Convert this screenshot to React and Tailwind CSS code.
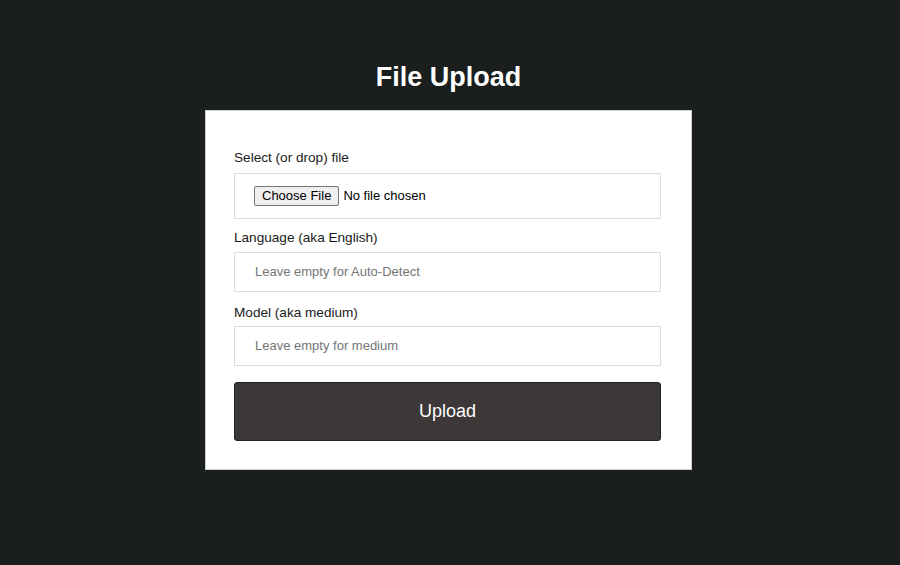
export default function App() {
  const font = { fontFamily: '"Liberation Sans", Arial, sans-serif' };
  return (
    <div className="min-h-screen w-full bg-[#1a1f1e] flex flex-col items-center pt-[59px] pr-[3px]" style={font}>
      <h1 className="text-white font-bold text-[27px] leading-[36px] mb-[15px]">File Upload</h1>
      <div className="w-[487px] bg-white border border-[#d0d0d0] pl-[28px] pr-[30px] pt-[37px] pb-[28px] flex flex-col">
        <label className="text-[13.6px] leading-[20px] text-[#1a1a1a] mb-[5px]">Select (or drop) file</label>
        <div className="h-[46px] border border-[#dcdcdc] flex items-center pl-[19px]">
          <span className="h-[20px] px-[7px] flex items-center bg-[#efefef] border border-[#767676] rounded-[2px] text-[13px] text-black">Choose File</span>
          <span className="ml-[4px] text-[13px] text-black">No file chosen</span>
        </div>
        <label className="mt-[9px] text-[13.6px] leading-[20px] text-[#1a1a1a] mb-[4px]">Language (aka English)</label>
        <div className="h-[40px] border border-[#dcdcdc] flex items-center pl-[20px] text-[13px] text-[#757575]">Leave empty for Auto-Detect</div>
        <label className="mt-[11px] text-[13.6px] leading-[20px] text-[#1a1a1a] mb-[3px]">Model (aka medium)</label>
        <div className="h-[40px] border border-[#dcdcdc] flex items-center pl-[20px] text-[13px] text-[#757575]">Leave empty for medium</div>
        <button className="mt-[16px] h-[59px] bg-[#3b3837] border border-[#222] rounded-[3px] text-white text-[18px] flex items-center justify-center">Upload</button>
      </div>
    </div>
  );
}
